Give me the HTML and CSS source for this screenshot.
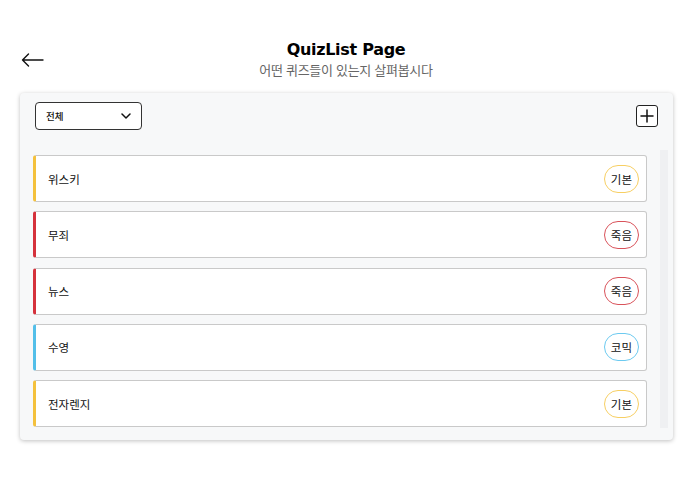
FILE: index.html
```html
<!DOCTYPE html>
<html lang="ko">
<head>
<meta charset="utf-8">
<title>QuizList Page</title>
<link rel="stylesheet" href="styles.css">
</head>
<body>
<header class="header">
  <button class="back" aria-label="back">
    <svg width="23" height="14" viewBox="0 0 23 14" fill="none" stroke="#111" stroke-width="1.4" stroke-linecap="round" stroke-linejoin="round">
      <path d="M22 7H1.5M7.5 1L1.5 7l6 6"/>
    </svg>
  </button>
  <div class="titles">
    <h1 class="title">QuizList Page</h1>
    <p class="subtitle">어떤 퀴즈들이 있는지 살펴봅시다</p>
  </div>
  <div></div>
</header>

<main class="panel">
  <div class="toolbar">
    <div class="select">
      <span>전체</span>
      <svg width="10" height="6" viewBox="0 0 10 6" fill="none" stroke="#111" stroke-width="1.5" stroke-linecap="round" stroke-linejoin="round"><path d="M1 1l4 4 4-4"/></svg>
    </div>
    <button class="add" aria-label="add">
      <svg width="14" height="14" viewBox="0 0 14 14" stroke="#111" stroke-width="1.5" stroke-linecap="round"><path d="M7 1v12M1 7h12"/></svg>
    </button>
  </div>
  <div class="list-area">
    <ul class="list">
      <li class="item basic"><span>위스키</span><span class="badge">기본</span></li>
      <li class="item death"><span>무죄</span><span class="badge">죽음</span></li>
      <li class="item death"><span>뉴스</span><span class="badge">죽음</span></li>
      <li class="item comic"><span>수영</span><span class="badge">코믹</span></li>
      <li class="item basic"><span>전자렌지</span><span class="badge">기본</span></li>
    </ul>
    <div class="scrollbar"></div>
  </div>
</main>
</body>
</html>
```

FILE: styles.css
```css
* { box-sizing: border-box; }
html, body { margin: 0; padding: 0; background: #fff; }
body {
  font-family: "Noto Sans CJK KR", "Noto Sans", sans-serif;
  color: #111;
  width: 700px;
  height: 484px;
  overflow: hidden;
}
.header {
  display: grid;
  grid-template-columns: 1fr auto 1fr;
  align-items: center;
  align-content: start;
  padding: 40px 29px 0 21px;
  height: 93px;
}
.back {
  background: none;
  border: 0;
  padding: 0;
  width: 23px;
  height: 14px;
  display: flex;
  margin-top: 0;
}
.titles { text-align: center; }
.title {
  margin: 0;
  font-family: "Comic Sans MS", "DejaVu Sans", sans-serif;
  font-weight: bold;
  font-size: 16px;
  line-height: 20px;
  letter-spacing: -0.3px;
  color: #000;
}
.subtitle {
  margin: 0;
  font-size: 13px;
  line-height: 19px;
  color: #666;
  letter-spacing: -0.3px;
}
.panel {
  margin: 0 27px 0 20px;
  height: 347px;
  background: #f7f8f9;
  border-radius: 4px;
  box-shadow: 0 1px 4px rgba(0, 0, 0, 0.25);
  padding: 9px 0 12px;
  display: flex;
  flex-direction: column;
}
.toolbar {
  display: flex;
  align-items: center;
  justify-content: space-between;
  padding: 0 15px;
  height: 28px;
}
.select {
  width: 107px;
  height: 28px;
  border: 1px solid #333;
  border-radius: 4px;
  background: #fff;
  display: flex;
  align-items: center;
  justify-content: space-between;
  padding: 0 10px;
  font-size: 9.5px;
  font-weight: 500;
}
.add {
  width: 22px;
  height: 22px;
  border: 1.5px solid #222;
  border-radius: 3px;
  background: #fff;
  padding: 0;
  display: flex;
  align-items: center;
  justify-content: center;
}
.list-area {
  margin: 20px 5px 0 13px;
  height: 278px;
  display: flex;
  gap: 13px;
  overflow: hidden;
}
.list {
  list-style: none;
  margin: 0;
  padding: 5px 0 0;
  flex: 1;
  display: flex;
  flex-direction: column;
  gap: 9.25px;
}
.item {
  height: 47px;
  flex: none;
  background: #fff;
  border: 1px solid #c9c9c9;
  border-left: 3px solid;
  border-radius: 3px;
  display: flex;
  align-items: center;
  justify-content: space-between;
  padding: 0 7px 0 12px;
  font-size: 11.5px;
  color: #111;
}
.badge {
  height: 28px;
  padding: 0 6px;
  border: 1px solid;
  border-radius: 14px;
  display: flex;
  align-items: center;
  font-size: 11.5px;
  color: #111;
}
.basic { border-left-color: #f4c13d; }
.basic .badge { border-color: #f7cf63; }
.death { border-left-color: #d5323c; }
.death .badge { border-color: #d9525a; }
.comic { border-left-color: #53bfe9; }
.comic .badge { border-color: #6ccaf0; }
.scrollbar {
  width: 8px;
  flex: none;
  background: #eff0f2;
}
```
